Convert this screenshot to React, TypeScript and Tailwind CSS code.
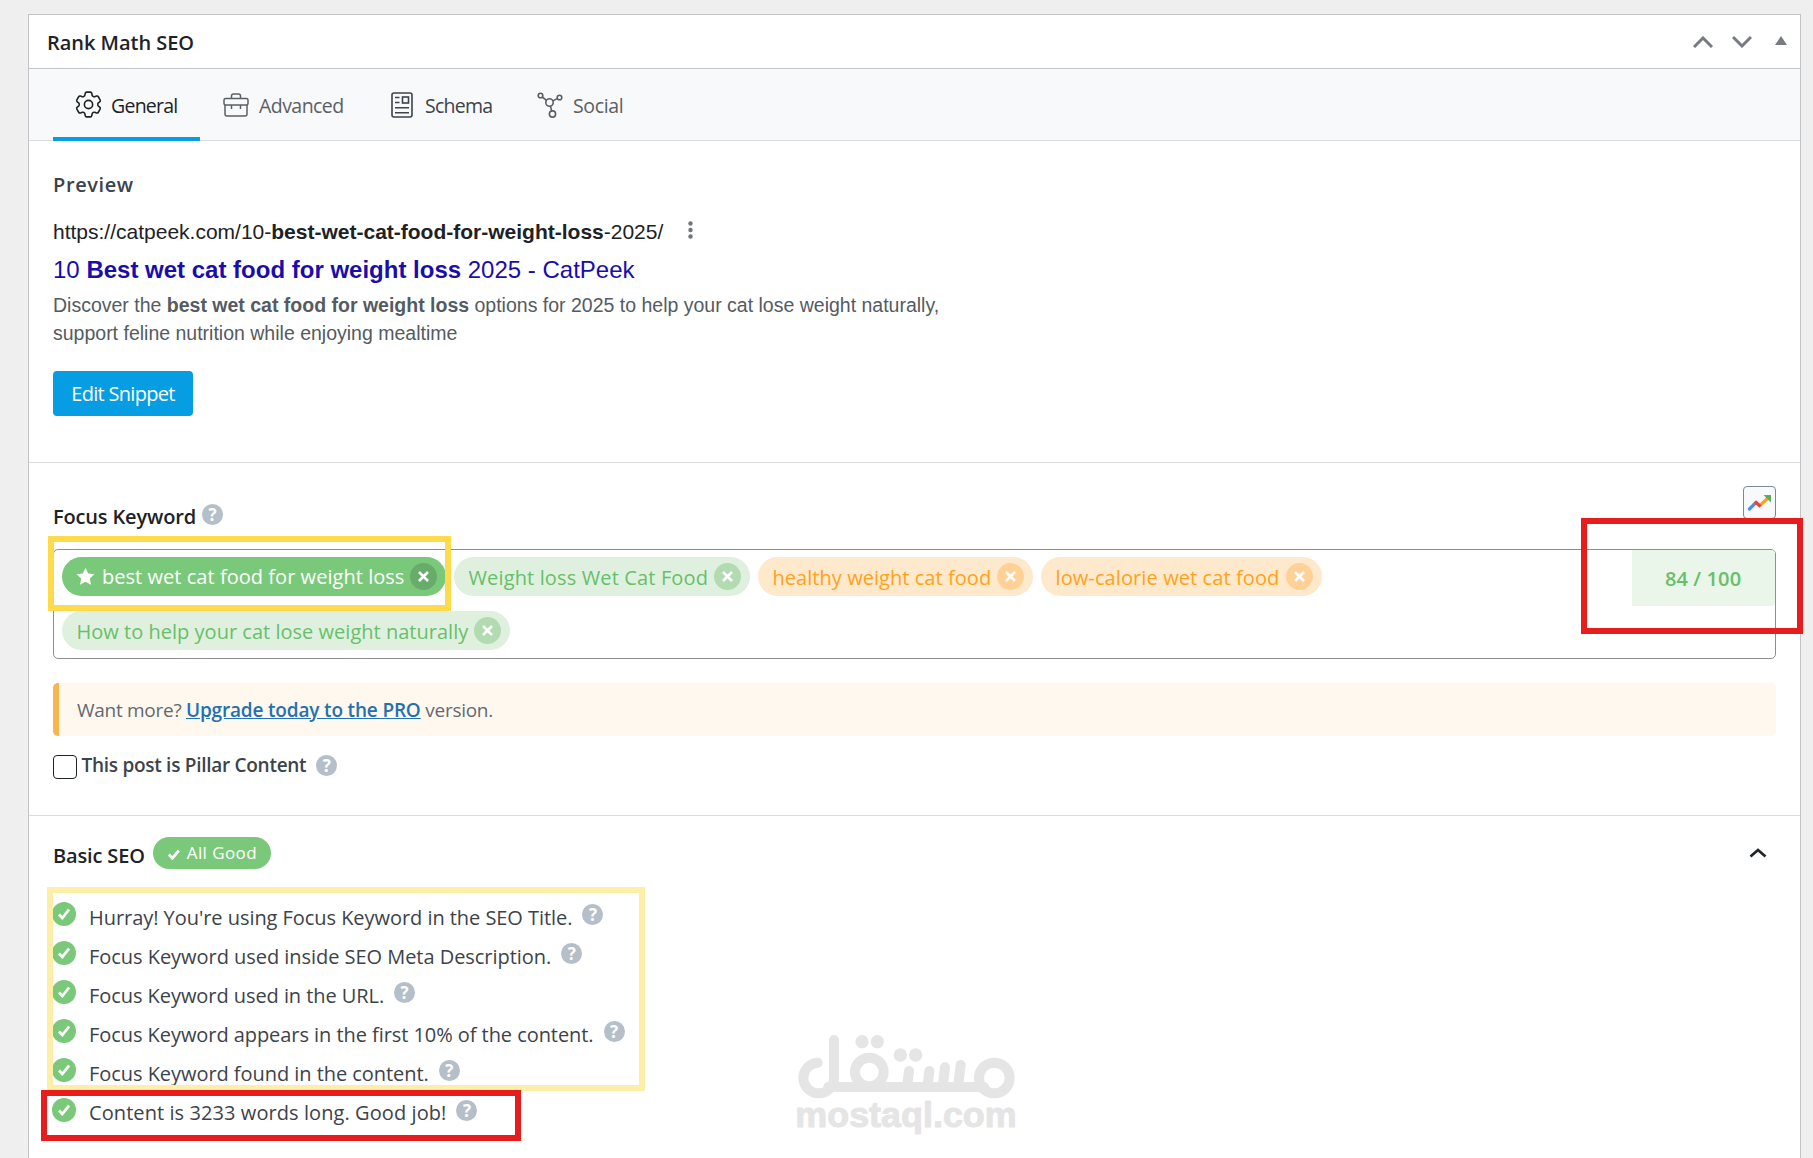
import React from 'react';
import { HiOutlineCog6Tooth } from 'react-icons/hi2';

const tabs = [
  { name: 'General', icon: GearIcon, box: 'w-[147px] pl-[20px] gap-[7px] text-[#1d2327]', tracking: 'tracking-[-0.75px]' },
  { name: 'Advanced', icon: BriefcaseIcon, box: 'w-[167px] pl-[23px] gap-[10px] text-[#5a6065]', tracking: 'tracking-[-0.55px]' },
  { name: 'Schema', icon: SchemaIcon, box: 'w-[148px] pl-[24px] gap-[12px] text-[#3c434a]', tracking: 'tracking-[-0.75px]' },
  { name: 'Social', icon: SocialIcon, box: 'w-[130px] pl-[22px] gap-[10px] text-[#5a6065]', tracking: 'tracking-[-0.35px]' },
];

const keywords = [
  { text: 'best wet cat food for weight loss', primary: true, color: 'good', width: 'w-[384px]', tracking: 'tracking-[0.04px]' },
  { text: 'Weight loss Wet Cat Food', primary: false, color: 'good', width: 'w-[296px]', tracking: 'tracking-[0.14px]' },
  { text: 'healthy weight cat food', primary: false, color: 'ok', width: 'w-[275px]', tracking: 'tracking-[0.05px]' },
  { text: 'low-calorie wet cat food', primary: false, color: 'ok', width: 'w-[281px]', tracking: 'tracking-[0.1px]' },
  { text: 'How to help your cat lose weight naturally', primary: false, color: 'good', width: 'w-[448px]', tracking: 'tracking-[0.02px]' },
];

const checks = [
  { text: "Hurray! You're using Focus Keyword in the SEO Title.", tracking: 'tracking-[-0.05px]' },
  { text: 'Focus Keyword used inside SEO Meta Description.', tracking: 'tracking-[-0.04px]' },
  { text: 'Focus Keyword used in the URL.', tracking: 'tracking-[-0.06px]' },
  { text: 'Focus Keyword appears in the first 10% of the content.', tracking: 'tracking-[-0.06px]' },
  { text: 'Focus Keyword found in the content.', tracking: 'tracking-[-0.05px]' },
  { text: 'Content is 3233 words long. Good job!', tracking: 'tracking-[0.08px]' },
];

function GearIcon() {
  return <HiOutlineCog6Tooth className="w-[33px] h-[33px] -mx-px [stroke-width:1.15]" />;
}

function BriefcaseIcon() {
  return (
    <svg className="w-[26px] h-[26px]" viewBox="0 0 26 26" fill="none" stroke="currentColor" strokeWidth="1.5">
      <path d="M8.5 6.5V4a2 2 0 0 1 2-2h5a2 2 0 0 1 2 2v2.5" />
      <rect x="1" y="6.5" width="24" height="6.5" rx="1.5" />
      <path d="M2 13v9a2 2 0 0 0 2 2h18a2 2 0 0 0 2-2v-9M8.5 13v4M17.5 13v4" />
    </svg>
  );
}

function SchemaIcon() {
  return (
    <svg className="w-[22px] h-[26px]" viewBox="0 0 22 26" fill="none" stroke="currentColor" strokeWidth="1.6">
      <rect x="1" y="1" width="20" height="24" rx="2" />
      <rect x="11.5" y="5" width="6" height="6" />
      <path d="M4 5.5h4.5M4 10.5h4.5M4 15.8h14M4 20.8h14" />
    </svg>
  );
}

function SocialIcon() {
  return (
    <svg className="w-[26px] h-[26px]" viewBox="0 0 26 26" fill="none" stroke="currentColor" strokeWidth="1.6">
      <circle cx="3.5" cy="3.5" r="2.3" />
      <circle cx="22.5" cy="5.5" r="2.3" />
      <circle cx="12.5" cy="10.5" r="3.7" />
      <circle cx="15.5" cy="22" r="3.1" />
      <path d="m5.2 5 4.4 3.3M20.3 6.6l-4.5 2.3M13.4 14.1l1.3 4.9" />
    </svg>
  );
}

function HelpIcon({ className = '' }: { className?: string }) {
  return (
    <span
      className={`inline-flex w-[21px] h-[21px] shrink-0 items-center justify-center rounded-full bg-[#b5bfc9] text-[17px] leading-none font-bold text-white ${className}`}
    >
      ?
    </span>
  );
}

function Keyword({ item }: { item: (typeof keywords)[number] }) {
  let colors = 'bg-[#dff1de] text-[#67bf6b]';
  let close = 'bg-[#b2dbb2]';
  if (item.primary) {
    colors = 'bg-[#7ac97a] text-white';
    close = 'bg-[#67ad69]';
  } else if (item.color === 'ok') {
    colors = 'bg-[#ffe9cc] text-[#ffa21a]';
    close = 'bg-[#ffd196]';
  }

  return (
    <div className={`flex h-[39px] items-center justify-between rounded-full pr-[9px] ${item.primary ? 'pl-[14px]' : 'pl-[14.5px]'} ${item.width} ${colors}`}>
      <span className="flex items-center">
        {item.primary && (
          <svg className="w-[19px] h-[19px] mr-[7px]" viewBox="0 0 20 20" fill="currentColor">
            <path d="m10 .8 2.8 6 6.6.8-4.9 4.5 1.3 6.6L10 15.4l-5.8 3.3 1.3-6.6L.6 7.6l6.6-.8z" />
          </svg>
        )}
        <span className={`whitespace-nowrap ${item.primary ? '' : 'mt-[2px]'} ${item.tracking}`}>{item.text}</span>
      </span>
      <span className={`flex w-[27px] h-[27px] items-center justify-center rounded-full ${close}`}>
        <svg className="w-[11px] h-[11px]" viewBox="0 0 11 11" stroke="#fff" strokeWidth="2.6">
          <path d="m1 1 9 9M10 1l-9 9" />
        </svg>
      </span>
    </div>
  );
}

function Watermark() {
  return (
    <svg className="absolute left-[759.5px] top-[1010px] w-[290px] h-[148px]" viewBox="0 0 870 444" fill="none">
      <g stroke="#e5e5e5" strokeWidth="30" strokeLinecap="round" strokeLinejoin="round">
        <path d="M173 158a46 46 0 1 0 49 46V90M205 231H672" />
        <circle cx="328" cy="186" r="43" />
        <circle cx="703" cy="204" r="46" />
        <path d="m447 183-5 40M508 183l-5 40M555 172l-6 50M602 165l-7 58" />
      </g>
      <g fill="#e5e5e5">
        <circle cx="306" cy="95" r="20" />
        <circle cx="352" cy="95" r="20" />
        <circle cx="421" cy="135" r="20" />
        <circle cx="467" cy="135" r="20" />
      </g>
      <text
        x="106"
        y="351"
        textLength="664"
        lengthAdjust="spacingAndGlyphs"
        fill="#e5e5e5"
        stroke="#e5e5e5"
        strokeWidth="3"
        strokeLinejoin="round"
        className="font-['Liberation_Sans',sans-serif] text-[106px] font-bold"
      >
        mostaql.com
      </text>
    </svg>
  );
}

export default function App() {
  return (
    <div className="relative h-[1158px] w-[1813px] overflow-hidden bg-[#efefef] pl-[28px] pt-[14px] font-['Open_Sans','Noto_Sans',sans-serif] text-[20px] leading-[30px] text-[#3c434a]">
      <div className="h-[1160px] w-[1773px] border border-[#c3c4c7] bg-white">
        {/* Meta box header */}
        <div className="flex h-[54px] items-center justify-between border-b border-[#c3c4c7] pl-[18px] pr-[13px]">
          <h2 className="mt-[2px] font-semibold tracking-[-0.03px] text-[#1d2327]">Rank Math SEO</h2>
          <div className="flex items-center text-[#787c82]">
            <svg className="mr-[19px] w-[20px] h-[12px]" viewBox="0 0 20 12" fill="none" stroke="currentColor" strokeWidth="3">
              <path d="m1 11 9-9 9 9" />
            </svg>
            <svg className="mr-[23px] w-[20px] h-[12px]" viewBox="0 0 20 12" fill="none" stroke="currentColor" strokeWidth="3">
              <path d="m1 1 9 9 9-9" />
            </svg>
            <svg className="mb-[3px] w-[12px] h-[9px]" viewBox="0 0 12 9" fill="currentColor">
              <path d="M6 0l6 9H0z" />
            </svg>
          </div>
        </div>

        {/* Tabs */}
        <div className="flex h-[72px] border-b border-[#dcdcde] bg-[#f8f9fb] pl-[24px] text-[19.5px]">
          {tabs.map((tab, index) => (
            <button key={tab.name} className={`flex h-[72px] items-center border-b-4 pt-[3px] ${index === 0 ? 'border-[#069de3]' : 'border-transparent'} ${tab.box}`}>
              <tab.icon />
              <span className={`mt-[2px] ${tab.tracking}`}>{tab.name}</span>
            </button>
          ))}
        </div>

        {/* Snippet preview */}
        <div className="h-[322px] border-b border-[#dcdcde] pl-[24px] pt-[29px]">
          <h3 className="font-semibold tracking-[0.6px]">Preview</h3>
          <div className="font-['Liberation_Sans',Arial,sans-serif]">
            <div className="mt-[17px] flex items-center text-[21px] text-[#202124]">
              <span>
                https://catpeek.com/10-<b>best-wet-cat-food-for-weight-loss</b>-2025/
              </span>
              <svg className="mb-[4px] ml-[25px] w-[5px] h-[18px]" viewBox="0 0 5 18" fill="#70757a">
                <circle cx="2.5" cy="2.5" r="2.2" />
                <circle cx="2.5" cy="9" r="2.2" />
                <circle cx="2.5" cy="15.5" r="2.2" />
              </svg>
            </div>
            <div className="mt-[7px] text-[24px] leading-[32px] text-[#1a0dab]">
              10 <b>Best wet cat food for weight loss</b> 2025 - CatPeek
            </div>
            <p className="mt-[5px] w-[910px] text-[19.5px] leading-[28px] text-[#545b62]">
              Discover the <b>best wet cat food for weight loss</b> options for 2025 to help your cat lose weight naturally,
              <br />
              support feline nutrition while enjoying mealtime
            </p>
          </div>
          <button className="mt-[24px] h-[45px] w-[140px] rounded-[4px] bg-[#069de3] pt-px tracking-[-0.7px] text-white">Edit Snippet</button>
        </div>

        {/* Focus keyword */}
        <div className="h-[353px] border-b border-[#dcdcde] pl-[24px] pr-[24px] pt-[23px]">
          <div className="flex h-[63px] items-start justify-between">
            <div className="flex items-start pt-[16px]">
              <h3 className="font-semibold tracking-[-0.16px] text-[#1d2327]">Focus Keyword</h3>
              <HelpIcon className="ml-[6px] mt-[2px]" />
            </div>
            <div className="flex w-[33px] h-[33px] items-center justify-center rounded-[4px] border border-[#7e8993] bg-[#f8f9fb]">
              <svg className="w-[25px] h-[18px]" viewBox="0 0 25 18" fill="none" strokeWidth="3.2">
                <path d="m2.5 15 6-6" stroke="#4a90e2" strokeLinecap="round" />
                <path d="m13 11.5 8-7.5" stroke="#ffa31a" />
                <path d="m8 7.5 5.5 5" stroke="#ea4335" />
                <path d="M16.5 1H24v7.5z" fill="#5bae60" />
              </svg>
            </div>
          </div>

          <div className="flex h-[110px] rounded-[5px] border border-[#8c8f94]">
            <div className="flex w-[1578px] shrink-0 flex-wrap content-start gap-x-[8px] gap-y-[15px] pl-[8px] pt-[7px]">
              {keywords.map((item) => (
                <Keyword key={item.text} item={item} />
              ))}
            </div>
            <div className="h-[56px] flex-1 rounded-br-[4px] rounded-tr-[4px] bg-[#e9f6e9] pl-[33px] pt-[14px] font-semibold tracking-[0.1px] text-[#67bf6b]">
              84 / 100
            </div>
          </div>

          <div className="mt-[24px] flex h-[53px] items-center rounded-[5px] border-l-[6px] border-[#f9b54c] bg-[#fff8ef] pl-[18px] text-[19px] tracking-[-0.28px] text-[#646970]">
            <p>
              Want more? <a className="font-semibold tracking-[-0.17px] text-[#2271b1] underline">Upgrade today to the PRO</a> version.
            </p>
          </div>

          <div className="mt-[14px] flex h-[30px] items-center">
            <span className="mt-[4px] h-[24px] w-[24px] rounded-[4px] border border-[#1d2327] bg-white" />
            <span className="ml-[4.5px] text-[19px] font-semibold tracking-[-0.28px]">This post is Pillar Content</span>
            <HelpIcon className="ml-[10px]" />
          </div>
        </div>

        {/* Basic SEO */}
        <div className="pl-[24px] pr-[33px] pt-[21px]">
          <div className="flex h-[32px] items-center">
            <h3 className="mt-[6px] font-semibold tracking-[-0.15px] text-[#1d2327]">Basic SEO</h3>
            <span className="ml-[8px] flex h-[32px] w-[118px] items-center rounded-full bg-[#7ac97a] pl-[15px] text-[17px] tracking-[0.4px] text-white">
              <svg className="mr-[7px] mt-[2px] w-[12px] h-[11px]" viewBox="0 0 12 11" fill="none" stroke="currentColor" strokeWidth="2.8">
                <path d="m1 5.5 3.3 3.8L10.8 1.5" />
              </svg>
              All Good
            </span>
            <svg className="ml-auto w-[18px] h-[10px]" viewBox="0 0 18 10" fill="none" stroke="#1d2327" strokeWidth="2.6">
              <path d="m1.5 8.5 7.5-6.5 7.5 6.5" />
            </svg>
          </div>

          <ul className="mt-[28px]">
            {checks.map((check) => (
              <li key={check.text} className="flex h-[39.1px] items-center">
                <span className="mb-[5px] flex w-[24px] h-[24px] -ml-px items-center justify-center rounded-full bg-[#7ac97a]">
                  <svg className="w-[12px] h-[12px]" viewBox="0 0 12 12" fill="none" stroke="#fff" strokeWidth="2.7">
                    <path d="m1 6.5 3.3 3.5L11 1.5" />
                  </svg>
                </span>
                <span className={`ml-[13px] mt-[2px] ${check.tracking}`}>{check.text}</span>
                <HelpIcon className="mb-[4px] ml-[10px]" />
              </li>
            ))}
          </ul>
        </div>
      </div>

      {/* Highlight frames drawn over the page */}
      <div className="absolute left-[48px] top-[536px] h-[75px] w-[403px] border-[6px] border-[#ffda4a]" />
      <div className="absolute left-[1581px] top-[518px] h-[116px] w-[222px] border-[6px] border-[#e81c1c]" />
      <div className="absolute left-[47px] top-[887px] h-[204px] w-[598px] border-[6px] border-[#ffeea8]" />
      <div className="absolute left-[41px] top-[1090px] h-[51px] w-[480px] border-[6px] border-[#e81c1c]" />

      <Watermark />
    </div>
  );
}
